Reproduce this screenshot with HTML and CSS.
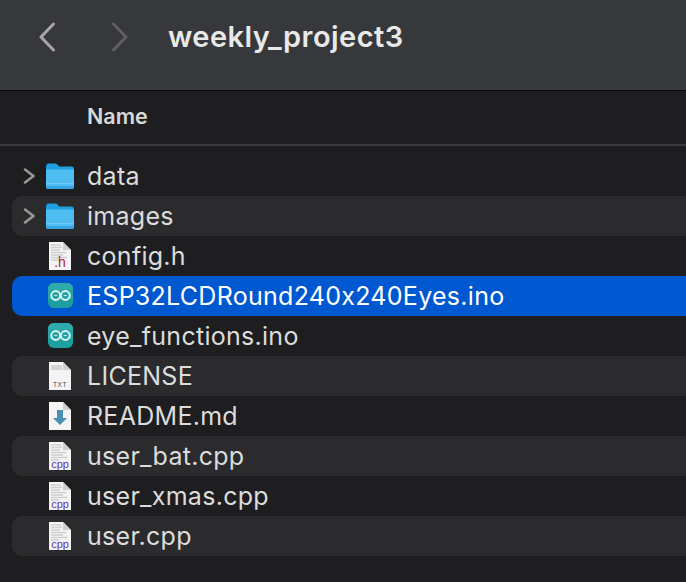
FILE: index.html
```html
<!DOCTYPE html>
<html lang="en">
<head>
    <meta charset="UTF-8">
    <title>weekly_project3</title>
    <link rel="stylesheet" href="styles.css">
</head>
<body>
    <svg class="defs" width="0" height="0">
        <symbol id="folder" viewBox="0 0 30 28">
            <path d="M1 5 Q1 1.5 4 1.5 H10 Q12 1.5 13 3 L14 4.5 H27 Q29 4.5 29 7 V10 H1 Z" fill="#1f9fe0"/>
            <path d="M1 7.500 H28 Q29 7.500 29 9 V25 Q29 27 27 27 H3 Q1 27 1 25 Z" fill="#4fbdf2"/>
            <rect x="1" y="21" width="28" height="1" fill="#6fcbf5"/>
            <path d="M1 24 H29 V25 Q29 27 27 27 H3 Q1 27 1 25 Z" fill="#35a6e2"/>
        </symbol>
        <symbol id="arduino" viewBox="0 0 28 28">
            <rect x="1" y="1" width="26" height="26" rx="6" fill="#1d9ea0"/>
            <rect x="1" y="1" width="26" height="13" rx="6" fill="#30abab"/>
            <rect x="1" y="8" width="26" height="10" fill="#27a5a6"/>
            <circle cx="9" cy="14" r="4.600" fill="none" stroke="#dff2f2" stroke-width="2"/>
            <circle cx="19" cy="14" r="4.600" fill="none" stroke="#dff2f2" stroke-width="2"/>
            <path d="M7.500 14 H10.500 M17.500 14 H20.500" stroke="#dff2f2" stroke-width="0.900"/>
        </symbol>
        <symbol id="page" viewBox="0 0 24 30">
            <path d="M1 1 H15 L23 9 V29 H1 Z" fill="#f4f4f4"/>
            <path d="M15 1 L23 9 H15 Z" fill="#d0d0d0"/>
        </symbol>
        <symbol id="code-lines" viewBox="0 0 24 30">
            <path d="M3 4 H13 M3 6.500 H14 M3 9 H12 M3 11.500 H18 M3 14 H15 M3 16.500 H19 M3 19 H11" stroke="#cfcfcf" stroke-width="1.300"/>
        </symbol>
    </svg>

    <header class="toolbar">
        <svg class="nav-arrow back" width="18" height="30" viewBox="0 0 18 30"><path d="M15.500 2 L3 15 L15.500 28"/></svg>
        <svg class="nav-arrow forward" width="18" height="30" viewBox="0 0 18 30"><path d="M2.500 2 L15 15 L2.500 28"/></svg>
        <h1 class="title">weekly_project3</h1>
    </header>

    <div class="column-head">Name</div>

    <ul class="files">
        <li class="row">
            <svg class="chevron" width="14" height="16" viewBox="0 0 14 16"><path d="M2 1.500 L10.500 8 L2 14.500"/></svg>
            <svg class="icon folder" width="30" height="28"><use href="#folder"/></svg>
            <span class="name">data</span>
        </li>
        <li class="row alt">
            <svg class="chevron" width="14" height="16" viewBox="0 0 14 16"><path d="M2 1.500 L10.500 8 L2 14.500"/></svg>
            <svg class="icon folder" width="30" height="28"><use href="#folder"/></svg>
            <span class="name">images</span>
        </li>
        <li class="row">
            <svg class="icon" width="24" height="30" viewBox="0 0 24 30">
                <use href="#page"/><use href="#code-lines"/>
                <text x="12" y="26" class="badge h">.h</text>
            </svg>
            <span class="name">config.h</span>
        </li>
        <li class="row selected">
            <svg class="icon app" width="27" height="27"><use href="#arduino"/></svg>
            <span class="name">ESP32LCDRound240x240Eyes.ino</span>
        </li>
        <li class="row">
            <svg class="icon app" width="27" height="27"><use href="#arduino"/></svg>
            <span class="name">eye_functions.ino</span>
        </li>
        <li class="row alt">
            <svg class="icon" width="24" height="30" viewBox="0 0 24 30">
                <use href="#page"/>
                <rect x="3" y="4" width="11" height="5" fill="#d4d4d4"/>
                <text x="12" y="26" class="badge txt">TXT</text>
            </svg>
            <span class="name">LICENSE</span>
        </li>
        <li class="row">
            <svg class="icon" width="24" height="30" viewBox="0 0 24 30">
                <use href="#page"/>
                <path d="M9 9 H15 V17 H19 L12 24 L5 17 H9 Z" fill="#4a90b5"/>
            </svg>
            <span class="name">README.md</span>
        </li>
        <li class="row alt">
            <svg class="icon" width="24" height="30" viewBox="0 0 24 30">
                <use href="#page"/><use href="#code-lines"/>
                <text x="12" y="27" class="badge cpp">cpp</text>
            </svg>
            <span class="name">user_bat.cpp</span>
        </li>
        <li class="row">
            <svg class="icon" width="24" height="30" viewBox="0 0 24 30">
                <use href="#page"/><use href="#code-lines"/>
                <text x="12" y="27" class="badge cpp">cpp</text>
            </svg>
            <span class="name">user_xmas.cpp</span>
        </li>
        <li class="row alt">
            <svg class="icon" width="24" height="30" viewBox="0 0 24 30">
                <use href="#page"/><use href="#code-lines"/>
                <text x="12" y="27" class="badge cpp">cpp</text>
            </svg>
            <span class="name">user.cpp</span>
        </li>
    </ul>
</body>
</html>
```

FILE: styles.css
```css
* {
    box-sizing: border-box;
}

body {
    margin: 0;
    height: 582px;
    overflow: hidden;
    background-color: #1e1e20;
    font-family: Inter, "Liberation Sans", sans-serif;
    font-feature-settings: "calt" 0;
    color: #dcdcdc;
}

.defs {
    position: absolute;
}

.toolbar {
    height: 91px;
    display: flex;
    align-items: center;
    padding-left: 38px;
    padding-bottom: 17px;
    background-color: #37383b;
    border-bottom: 1px solid #0a0a0a;
}

.nav-arrow {
    flex-shrink: 0;
    fill: none;
    stroke-width: 3;
    stroke-linecap: round;
    stroke-linejoin: round;
}

.back {
    stroke: #a6a7a9;
}

.forward {
    margin-left: 55px;
    stroke: #5f6062;
}

.title {
    margin: 0 0 0 39px;
    font-size: 29px;
    font-weight: 600;
    letter-spacing: 0.450px;
    color: #e9e9ea;
}

.column-head {
    height: 55px;
    padding-left: 87px;
    padding-top: 12px;
    font-size: 21.500px;
    font-weight: 600;
    color: #d8d8d9;
    border-bottom: 2px solid #3a3a3c;
}

.files {
    list-style: none;
    margin: 10px 0 0 12px;
    padding: 0;
}

.row {
    position: relative;
    height: 40px;
    display: flex;
    align-items: center;
    padding-left: 75px;
    border-radius: 10px 0 0 10px;
    font-size: 25px;
    letter-spacing: 0.280px;
    white-space: nowrap;
}

.alt {
    background-color: #2b2b2d;
}

.selected {
    background-color: #0058d0;
    color: #ffffff;
}

.chevron {
    position: absolute;
    left: 11px;
    top: 12px;
    fill: none;
    stroke: #98989a;
    stroke-width: 2.500;
    stroke-linecap: round;
    stroke-linejoin: round;
}

.icon {
    position: absolute;
    left: 36px;
    top: 5px;
}

.folder {
    left: 33px;
    top: 6px;
}

.app {
    left: 35px;
    top: 6px;
}

.badge {
    font-family: "Liberation Sans", sans-serif;
    text-anchor: middle;
    letter-spacing: 0;
}

.cpp {
    font-size: 11px;
    fill: #6a2fa8;
}

.h {
    font-size: 14px;
    fill: #b3272d;
}

.txt {
    font-size: 6.500px;
    fill: #444444;
    letter-spacing: 0.500px;
}
```
